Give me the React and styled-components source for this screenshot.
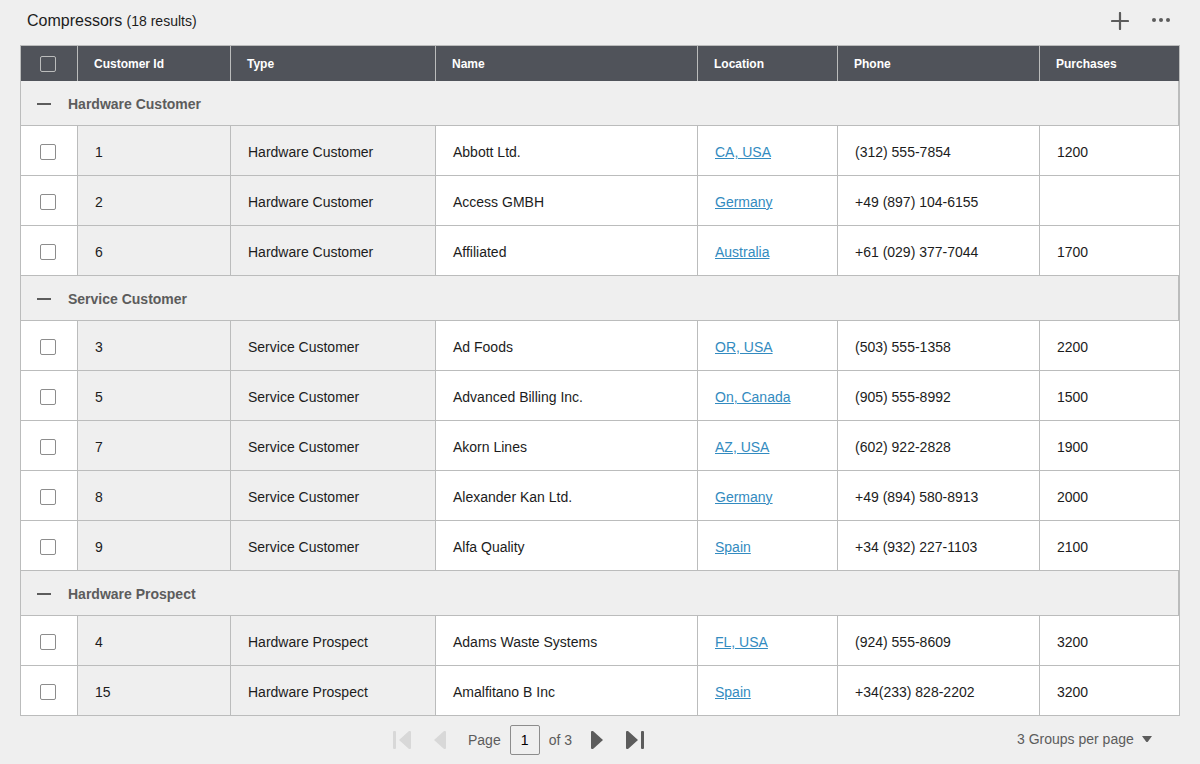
import React, { useState } from "react";
import styled, { createGlobalStyle, css } from "styled-components";

const color = {
  page: "#efefef",
  head: "#50535a",
  line: "#bbbcbc",
  text: "#1c1c1c",
  muted: "#5c5c5c",
  disabled: "#d8d8d8",
  link: "#338bc0",
};

const GlobalStyle = createGlobalStyle`
  * { box-sizing: border-box; }
  body {
    margin: 0;
    background: ${color.page};
    color: ${color.text};
    font-family: "Liberation Sans", Arial, sans-serif;
    font-size: 14px;
    line-height: 20px;
  }
  button, input, select { font: inherit; color: inherit; }
`;

const Page = styled.main`
  padding: 0 20px;
`;

const TitleBar = styled.header`
  display: flex;
  align-items: center;
  justify-content: space-between;
  height: 45px;
  padding: 0 7px 4px;
`;

const Title = styled.h1`
  margin: 0;
  font-size: 16px;
  font-weight: 400;
`;

const Count = styled.span`
  font-size: 14px;
`;

const Actions = styled.div`
  display: flex;
  gap: 17px;
`;

const IconButton = styled.button`
  display: flex;
  align-items: center;
  justify-content: center;
  width: ${(p) => p.$width || 24}px;
  height: 24px;
  padding: 0;
  border: 0;
  background: none;
  color: ${color.muted};
  cursor: pointer;
  &:disabled {
    color: ${color.disabled};
    cursor: default;
  }
`;

const Icon = styled.svg`
  display: block;
  fill: currentColor;
`;

const Grid = styled.table`
  width: 100%;
  table-layout: fixed;
  border: 1px solid ${color.line};
  border-bottom: 0;
  border-collapse: separate;
  border-spacing: 0;
`;

const Column = styled.col`
  width: ${(p) => p.$width}px;
`;

const divider = css`
  border-right: 1px solid ${color.line};
  &:last-child {
    border-right: 0;
  }
`;

const HeadCell = styled.th`
  ${divider}
  height: 35px;
  padding: 0 16px;
  background: ${color.head};
  color: #fff;
  font-size: 12px;
  text-align: left;
`;

const SelectHead = styled(HeadCell)`
  padding: 0 0 0 19px;
`;

const GroupCell = styled.th`
  height: 45px;
  padding: 2px 16px 0;
  border-right: 1px solid ${color.line};
  border-bottom: 1px solid ${color.line};
  background: ${color.page};
  color: ${color.muted};
  text-align: left;
`;

const GroupToggle = styled.button`
  display: flex;
  align-items: center;
  gap: 17px;
  padding: 0;
  border: 0;
  background: none;
  font-weight: 700;
  cursor: pointer;
`;

const Cell = styled.td`
  ${divider}
  height: 50px;
  padding: 3px 17px 0;
  border-bottom: 1px solid ${color.line};
  background: ${(p) => (p.$locked ? color.page : "#fff")};
`;

const SelectCell = styled(Cell)`
  padding: 3px 0 0 19px;
`;

const Tick = styled.input`
  appearance: none;
  display: block;
  width: 16px;
  height: 16px;
  margin: 0;
  border: 1px solid ${(p) => (p.$onDark ? "#bbbcbc" : "#8c8c8c")};
  border-radius: 2px;
  background: ${(p) => (p.$onDark ? "transparent" : "#fff")};
  cursor: pointer;
  &:checked {
    background: ${color.link};
  }
`;

const Link = styled.a`
  color: ${color.link};
  text-decoration: underline;
`;

const Footer = styled.footer`
  display: flex;
  align-items: center;
  height: 48px;
`;

const Pager = styled.nav`
  display: flex;
  flex: 1;
  align-items: center;
  justify-content: center;
  color: ${color.muted};
`;

const Step = styled.div`
  display: flex;
  gap: 23px;
`;

const PageField = styled.label`
  display: flex;
  align-items: center;
  gap: 9px;
  margin: 0 19px 0 22px;
`;

const PageInput = styled.input`
  width: 30px;
  height: 30px;
  padding: 0;
  border: 1px solid #8c8c8c;
  border-radius: 2px;
  background: transparent;
  color: #000;
  text-align: center;
`;

const PerPage = styled.div`
  position: relative;
  width: 163px;
  color: ${color.muted};
`;

const PerPageSelect = styled.select`
  appearance: none;
  display: block;
  width: 100%;
  height: 22px;
  padding: 0 0 2px;
  border: 0;
  background: none;
  cursor: pointer;
`;

const Caret = styled(Icon)`
  position: absolute;
  top: 7px;
  right: 28px;
  pointer-events: none;
`;

const columns = ["Customer Id", "Type", "Name", "Location", "Phone", "Purchases"];
const widths = [57, 153, 205, 262, 140, 202, 139];

const groups = [
  {
    name: "Hardware Customer",
    rows: [
      [1, "Abbott Ltd.", "CA, USA", "(312) 555-7854", "1200"],
      [2, "Access GMBH", "Germany", "+49 (897) 104-6155", ""],
      [6, "Affiliated", "Australia", "+61 (029) 377-7044", "1700"],
    ],
  },
  {
    name: "Service Customer",
    rows: [
      [3, "Ad Foods", "OR, USA", "(503) 555-1358", "2200"],
      [5, "Advanced Billing Inc.", "On, Canada", "(905) 555-8992", "1500"],
      [7, "Akorn Lines", "AZ, USA", "(602) 922-2828", "1900"],
      [8, "Alexander Kan Ltd.", "Germany", "+49 (894) 580-8913", "2000"],
      [9, "Alfa Quality", "Spain", "+34 (932) 227-1103", "2100"],
    ],
  },
  {
    name: "Hardware Prospect",
    rows: [
      [4, "Adams Waste Systems", "FL, USA", "(924) 555-8609", "3200"],
      [15, "Amalfitano B Inc", "Spain", "+34(233) 828-2202", "3200"],
    ],
  },
];

function Group({ name, rows }) {
  const [open, setOpen] = useState(true);
  return (
    <tbody>
      <tr>
        <GroupCell colSpan={7} scope="rowgroup">
          <GroupToggle aria-expanded={open} onClick={() => setOpen(!open)}>
            <Icon width="14" height="14" viewBox="0 0 14 14" aria-hidden="true">
              <path d="M0 6h14v2H0z" />
              {!open && <path d="M6 0h2v14H6z" />}
            </Icon>
            {name}
          </GroupToggle>
        </GroupCell>
      </tr>
      {open &&
        rows.map(([id, customer, place, phone, purchases]) => (
          <tr key={id}>
            <SelectCell>
              <Tick type="checkbox" aria-label={`Select ${customer}`} />
            </SelectCell>
            <Cell $locked>{id}</Cell>
            <Cell $locked>{name}</Cell>
            <Cell>{customer}</Cell>
            <Cell>
              <Link href="#location">{place}</Link>
            </Cell>
            <Cell>{phone}</Cell>
            <Cell>{purchases}</Cell>
          </tr>
        ))}
    </tbody>
  );
}

export default function App() {
  return (
    <Page>
      <GlobalStyle />
      <TitleBar>
        <Title>
          Compressors <Count>(18 results)</Count>
        </Title>
        <Actions>
          <IconButton aria-label="Add">
            <Icon width="18" height="18" viewBox="0 0 18 18">
              <path
                d="M9 1v16M1 9h16"
                fill="none"
                stroke="currentColor"
                strokeWidth="2.2"
                strokeLinecap="round"
              />
            </Icon>
          </IconButton>
          <IconButton aria-label="More actions">
            <Icon width="18" height="6" viewBox="0 0 18 6">
              <circle cx="2" cy="2" r="2" />
              <circle cx="9" cy="2" r="2" />
              <circle cx="16" cy="2" r="2" />
            </Icon>
          </IconButton>
        </Actions>
      </TitleBar>

      <Grid>
        <colgroup>
          {widths.map((w, i) => (
            <Column key={i} $width={w} />
          ))}
        </colgroup>
        <thead>
          <tr>
            <SelectHead>
              <Tick type="checkbox" $onDark aria-label="Select all" />
            </SelectHead>
            {columns.map((label) => (
              <HeadCell key={label} scope="col">
                {label}
              </HeadCell>
            ))}
          </tr>
        </thead>
        {groups.map((g) => (
          <Group key={g.name} {...g} />
        ))}
      </Grid>

      <Footer>
        <Pager aria-label="Pagination">
          <Step>
            <IconButton $width={18} disabled aria-label="First page">
              <Icon width="18" height="18" viewBox="0 0 18 18">
                <path d="M0 1Q0 0 1 0h1q1 0 1 1v16q0 1-1 1H1q-1 0-1-1zM6 9L16 0h1q1 0 1 1v16q0 1-1 1h-1z" />
              </Icon>
            </IconButton>
            <IconButton $width={12} disabled aria-label="Previous page">
              <Icon width="12" height="18" viewBox="0 0 12 18">
                <path d="M0 9L10 0h1q1 0 1 1v16q0 1-1 1h-1z" />
              </Icon>
            </IconButton>
          </Step>
          <PageField>
            Page
            <PageInput defaultValue="1" />
            of 3
          </PageField>
          <Step>
            <IconButton $width={12} aria-label="Next page">
              <Icon width="12" height="18" viewBox="0 0 12 18">
                <path d="M12 9L2 0H1Q0 0 0 1v16q0 1 1 1h1z" />
              </Icon>
            </IconButton>
            <IconButton $width={18} aria-label="Last page">
              <Icon width="18" height="18" viewBox="0 0 18 18">
                <path d="M12 9L2 0H1Q0 0 0 1v16q0 1 1 1h1zM15 1q0-1 1-1h1q1 0 1 1v16q0 1-1 1h-1q-1 0-1-1z" />
              </Icon>
            </IconButton>
          </Step>
        </Pager>
        <PerPage>
          <PerPageSelect aria-label="Groups per page" defaultValue="3">
            <option value="3">3 Groups per page</option>
            <option value="5">5 Groups per page</option>
            <option value="10">10 Groups per page</option>
          </PerPageSelect>
          <Caret width="10" height="6" viewBox="0 0 10 6" aria-hidden="true">
            <path d="M0 0h10L6 5.400Q5 6.400 4 5.400z" />
          </Caret>
        </PerPage>
      </Footer>
    </Page>
  );
}
